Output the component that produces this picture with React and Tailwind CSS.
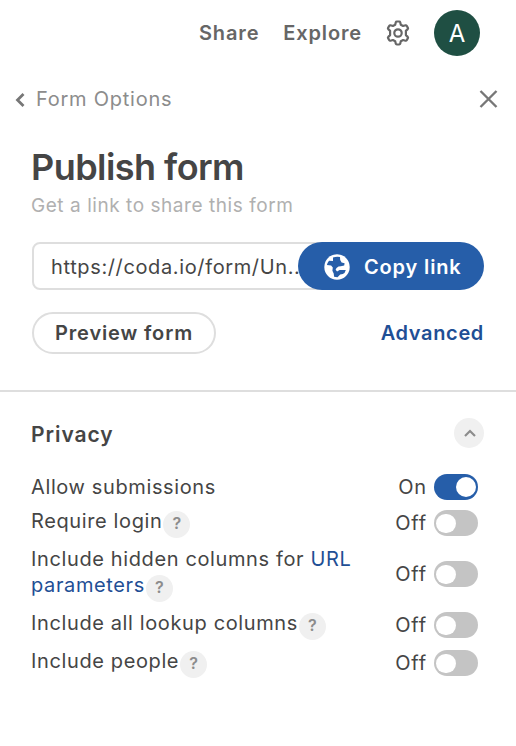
import React, { useState } from 'react';

const INITIAL_OPTIONS = [
  { id: 'submissions', label: 'Allow submissions', enabled: true, row: 'h-[26px] mb-[10px]' },
  { id: 'login', label: 'Require login', enabled: false, help: true, row: 'h-[26px] mb-[12px]' },
  { id: 'hidden', label: 'Include hidden columns for ', link: 'URL parameters', enabled: false, help: true, row: 'h-[52px] mb-[12px]' },
  { id: 'lookup', label: 'Include all lookup columns', enabled: false, help: true, row: 'h-[26px] mb-[12px]' },
  { id: 'people', label: 'Include people', enabled: false, help: true, row: 'h-[26px]' },
];

const GearIcon = () => (
  <svg width="26" height="26" viewBox="0 0 26 26" fill="none" stroke="#666" strokeWidth="2.2" strokeLinejoin="round">
    <path d="M10.8 2.2Q11 1.5 11.8 1.5h2.4q.8 0 1 .7l.6 2.5 2.3 1.3 2.4-.7q.8-.2 1.200.5l1.200 2.100q.4.700-.2 1.200L20.900 10.900v4.200l1.800 1.800q.6.500.2 1.200l-1.200 2.100q-.4.700-1.200.5l-2.400-.7-2.300 1.300-.6 2.500q-.2.700-1 .7h-2.400q-.8 0-1-.7l-.6-2.500-2.300-1.300-2.400.7q-.8.2-1.200-.5l-1.200-2.100q-.4-.7.200-1.200l1.800-1.800v-4.200L3.300 9.100q-.6-.5-.2-1.200l1.200-2.100q.4-.7 1.200-.5l2.400.7 2.300-1.300z" />
    <circle cx="13" cy="13" r="3.700" />
  </svg>
);

const GlobeIcon = () => (
  <svg width="26" height="26" viewBox="0 0 26 26">
    <circle cx="13" cy="13" r="12.7" fill="#fff" />
    <path
      d="M9 3.500Q12.500 2.300 16 3L16.200 6l1.400 2.500 3 .8-.4 2.200-3.400.8-2.300.1-2 1.500-.9 1.900 1.500 1.700 2.500-1.400h6.200q-.6 3-3 4l-2.600.4-2.700 2.700-3.400-.4-.4-3.400-1.300-2.700.4-3.300-1.700-2L2.900 11Q3.300 8.900 5 6.700l4 .4z"
      fill="#265ea9"
    />
  </svg>
);

const HelpBadge = () => (
  <button
    type="button"
    aria-label="Help"
    className="relative top-[2px] -my-2 ml-px inline-flex h-[27px] w-[27px] items-center justify-center rounded-full bg-[#f0f0f0] pb-[3px] align-middle text-[16px] leading-none font-semibold tracking-normal text-[#8c8c8c]"
  >
    ?
  </button>
);

const Toggle = ({ enabled, onChange }) => (
  <button
    type="button"
    role="switch"
    aria-checked={enabled}
    onClick={onChange}
    className={`flex h-[26px] w-[44px] items-center rounded-full px-[2px] ${enabled ? 'justify-end bg-[#265ea9]' : 'justify-start bg-[#c4c4c4]'}`}
  >
    <span className={`w-5 rounded-full bg-white ${enabled ? 'h-5' : 'h-[19px]'}`} />
  </button>
);

const App = () => {
  const [options, setOptions] = useState(INITIAL_OPTIONS);
  const [isOpen, setIsOpen] = useState(true);

  const toggleOption = (id) => {
    setOptions(prev => prev.map(o => (o.id === id ? { ...o, enabled: !o.enabled } : o)));
  };

  return (
    <div className="h-[746px] w-[516px] overflow-hidden bg-white font-['Inter','Liberation_Sans',sans-serif] text-[20px] text-[#454545]">
      {/* Toolbar */}
      <header className="flex h-[66px] items-center justify-end pr-9 font-semibold text-[#666]">
        <span className="tracking-[0.85px]">Share</span>
        <span className="ml-6 tracking-[0.85px]">Explore</span>
        <span className="ml-[23px]"><GearIcon /></span>
        <span className="ml-[23px] flex h-[46px] w-[46px] items-center justify-center rounded-full bg-[#1f4f43] pt-px text-[24px] font-normal text-white">A</span>
      </header>

      {/* Panel navigation */}
      <div className="flex h-[66px] items-center pr-[18px] pl-[15px]">
        <svg className="mt-0.5" width="10" height="14" viewBox="0 0 10 14" fill="none" stroke="#777" strokeWidth="2.8">
          <path d="M8.500 1 2.500 7l6 6" />
        </svg>
        <span className="ml-[11px] tracking-[0.75px] text-[#8c8c8c]">Form Options</span>
        <svg className="ml-auto" width="19" height="19" viewBox="0 0 19 19" fill="none" stroke="#777" strokeWidth="2.4">
          <path d="m1.500 1 16 16m0-16-16 16" />
        </svg>
      </div>

      {/* Publish section */}
      <section className="h-[260px] border-b-2 border-[#dedede] px-8 pt-[13px]">
        <h1 className="-ml-px text-[36px] leading-[44px] font-semibold tracking-[-0.55px]">Publish form</h1>
        <p className="-ml-px h-[53px] pt-[3px] text-[19px] leading-[28px] tracking-[0.55px] text-[#b0b0b0]">Get a link to share this form</p>
        <div className="flex h-12">
          <div className="flex w-[290px] shrink-0 items-center overflow-hidden rounded-l-lg border-2 border-[#dedede] pt-px pl-[17px] tracking-[0.63px] whitespace-nowrap">
            https://coda.io/form/Un..
          </div>
          <button type="button" className="-ml-6 flex w-[186px] shrink-0 items-center rounded-full bg-[#265ea9] pt-px pl-[26px] font-semibold tracking-[0.85px] text-white">
            <GlobeIcon />
            <span className="ml-[14px]">Copy link</span>
          </button>
        </div>
        <div className="mt-[22px] flex items-center justify-between">
          <button type="button" className="h-[42px] w-[184px] rounded-full border-2 border-[#dedede] font-semibold tracking-[0.85px]">Preview form</button>
          <a href="#advanced" className="font-semibold tracking-[0.65px] text-[#1f4f95]">Advanced</a>
        </div>
      </section>

      {/* Privacy section */}
      <section className="pt-[26px] pr-8 pl-[31px]">
        <div className="flex h-[30px] items-center justify-between">
          <h2 className="pt-[3px] text-[21px] font-semibold tracking-[0.95px]">Privacy</h2>
          <button
            type="button"
            aria-label="Toggle privacy options"
            onClick={() => setIsOpen(!isOpen)}
            className="flex h-[30px] w-[30px] items-center justify-center rounded-full bg-[#f0f0f0]"
          >
            <svg className="ml-0.5" width="12" height="8" viewBox="0 0 12 8" fill="none" stroke="#8c8c8c" strokeWidth="2.2">
              <path d="m1 7 5-5 5 5" />
            </svg>
          </button>
        </div>
        {isOpen && (
          <div className="mt-[26px] pr-[6px]">
            {options.map(option => (
              <div key={option.id} className={`flex items-center justify-between ${option.row}`}>
                <div className={`w-[340px] leading-[26px] tracking-[0.62px] ${option.help ? 'pb-[5px]' : ''}`}>
                  {option.label}
                  {option.link && <a href="#parameters" className="text-[#1f4f95]">{option.link}</a>}
                  {option.help && <HelpBadge />}
                </div>
                <div className="flex items-center gap-[7px] tracking-[0.8px]">
                  <span>{option.enabled ? 'On' : 'Off'}</span>
                  <Toggle enabled={option.enabled} onChange={() => toggleOption(option.id)} />
                </div>
              </div>
            ))}
          </div>
        )}
      </section>
    </div>
  );
};

export default App;
